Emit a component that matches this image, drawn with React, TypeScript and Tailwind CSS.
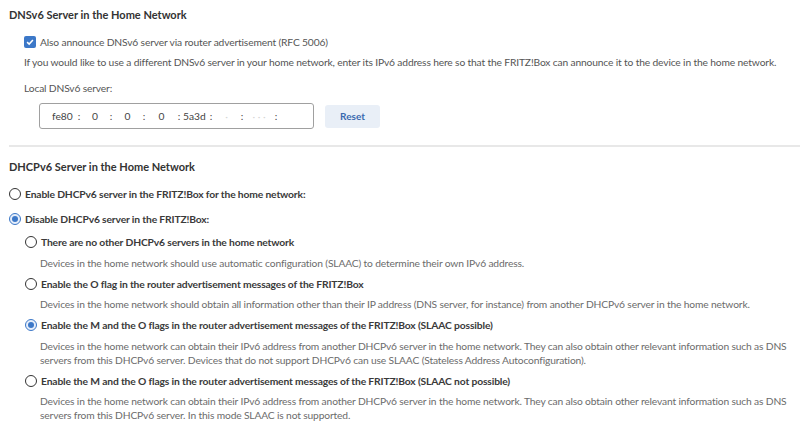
const font = { fontFamily: '"Lato", "Noto Sans", sans-serif' };

function Radio({ checked }: { checked?: boolean }) {
  if (checked) {
    return (
      <span className="flex h-[12px] w-[12px] shrink-0 items-center justify-center rounded-full border-[1.5px] border-[#3c78c8] bg-[#e6eefa]">
        <span className="h-[6px] w-[6px] rounded-full bg-[#3c78c8]" />
      </span>
    );
  }
  return <span className="h-[12px] w-[12px] shrink-0 rounded-full border-[1.5px] border-[#333]" />;
}

function Option({ checked, label, children }: { checked?: boolean; label: string; children?: React.ReactNode }) {
  return (
    <div>
      <label className="flex h-[14px] items-center gap-[4px] text-[10.3px] font-bold tracking-[-0.15px] text-[#3a3a3a]">
        <Radio checked={checked} />
        {label}
      </label>
      {children && <p className="mt-[6.5px] pl-[15px] text-[#6b6b6b]">{children}</p>}
    </div>
  );
}

function Cell({ v, w, align = "text-center", faint }: { v: string; w: string; align?: string; faint?: boolean }) {
  return <span className={`${w} ${align} inline-block ${faint ? "text-[#d6d6d6]" : ""}`}>{v}</span>;
}

const Colon = () => <span className="inline-block w-[8px] text-center">:</span>;

export default function App() {
  return (
    <div
      className="h-[434px] w-[800px] overflow-hidden bg-white pt-[8px] text-[10.25px] leading-[14px] tracking-[-0.15px] text-[#555]"
      style={font}
    >
      <div className="px-[9px]">
        <h2 className="text-[11px] font-bold leading-[14px] tracking-normal text-[#333]">DNSv6 Server in the Home Network</h2>
        <div className="pl-[15px]">
          <label className="mt-[13px] flex h-[14px] items-center gap-[4px] text-[10.25px]">
            <span className="flex h-[12px] w-[12px] items-center justify-center rounded-[2px] bg-[#3c78c8]">
              <svg viewBox="0 0 12 12" className="h-[10px] w-[10px]">
                <path d="M2.5 6.2 5 8.5 9.5 3.5" fill="none" stroke="white" strokeWidth="1.8" />
              </svg>
            </span>
            Also announce DNSv6 server via router advertisement (RFC 5006)
          </label>
          <p className="mt-[6px]">
            If you would like to use a different DNSv6 server in your home network, enter its IPv6 address here so that the FRITZ!Box can announce it to the device in the home network.
          </p>
          <p className="mt-[12px]">Local DNSv6 server:</p>
          <div className="mt-[8px] flex items-center gap-[11px] pl-[15px]">
            <div className="flex h-[26px] w-[275px] items-center rounded-[3px] border border-[#a0a0a0] pl-[12px] tracking-normal text-[#444]">
              <Cell v="fe80" w="w-[23px]" align="text-left" />
              <Colon />
              <Cell v="0" w="w-[24px]" />
              <Colon />
              <Cell v="0" w="w-[25px]" />
              <Colon />
              <Cell v="0" w="w-[27px]" />
              <Colon />
              <Cell v="5a3d" w="w-[24px]" align="text-left" />
              <Colon />
              <Cell v="·" w="w-[23px]" faint />
              <Colon />
              <Cell v="· · ·" w="w-[26px]" faint />
              <Colon />
            </div>
            <button className="h-[23px] w-[55px] rounded-[3px] bg-[#e9eff7] text-[10px] font-bold tracking-normal text-[#3a6ab0]">
              Reset
            </button>
          </div>
        </div>
      </div>
      <div className="mt-[16px] ml-[9px] border-t-2 border-[#e8e8e8]" />
      <div className="px-[9px] pt-[13px]">
        <h2 className="text-[11px] font-bold leading-[14px] tracking-normal text-[#333]">DHCPv6 Server in the Home Network</h2>
        <div className="mt-[13px] flex flex-col gap-[11px]">
          <Option label="Enable DHCPv6 server in the FRITZ!Box for the home network:" />
          <Option checked label="Disable DHCPv6 server in the FRITZ!Box:" />
        </div>
        <div className="mt-[9px] flex flex-col gap-[7px] pl-[16px]">
          <Option label="There are no other DHCPv6 servers in the home network">
            Devices in the home network should use automatic configuration (SLAAC) to determine their own IPv6 address.
          </Option>
          <Option label="Enable the O flag in the router advertisement messages of the FRITZ!Box">
            Devices in the home network should obtain all information other than their IP address (DNS server, for instance) from another DHCPv6 server in the home network.
          </Option>
          <Option checked label="Enable the M and the O flags in the router advertisement messages of the FRITZ!Box (SLAAC possible)">
            Devices in the home network can obtain their IPv6 address from another DHCPv6 server in the home network. They can also obtain other relevant information such as DNS servers from this DHCPv6 server. Devices that do not support DHCPv6 can use SLAAC (Stateless Address Autoconfiguration).
          </Option>
          <Option label="Enable the M and the O flags in the router advertisement messages of the FRITZ!Box (SLAAC not possible)">
            Devices in the home network can obtain their IPv6 address from another DHCPv6 server in the home network. They can also obtain other relevant information such as DNS servers from this DHCPv6 server. In this mode SLAAC is not supported.
          </Option>
        </div>
      </div>
    </div>
  );
}
